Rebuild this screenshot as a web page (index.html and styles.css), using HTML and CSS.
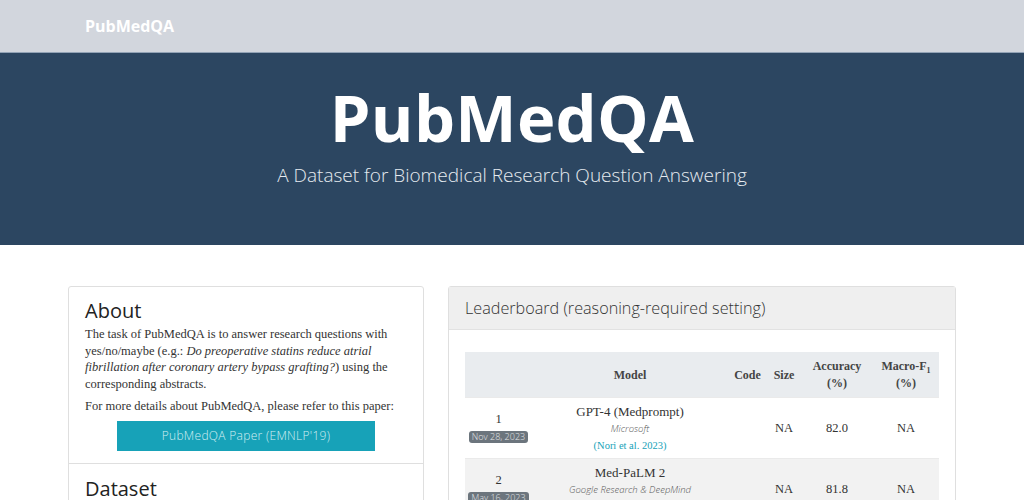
FILE: index.html
```html
<!DOCTYPE html>
<html>
<head>
<meta charset="utf-8">
<link rel="stylesheet" href="styles.css">
</head>
<body>
<nav class="navbar"><a class="brand" href="#">PubMedQA</a></nav>
<header class="hero">
  <h1 class="hero-title">PubMedQA</h1>
  <p class="hero-sub">A Dataset for Biomedical Research Question Answering</p>
</header>
<main class="content">
  <section class="card side">
    <div class="card-block">
      <h2 class="card-title">About</h2>
      <p class="para">The task of PubMedQA is to answer research questions with yes/no/maybe (e.g.: <em>Do preoperative statins reduce atrial fibrillation after coronary artery bypass grafting?</em>) using the corresponding abstracts.</p>
      <p class="para">For more details about PubMedQA, please refer to this paper:</p>
      <a class="btn" href="#">PubMedQA Paper (EMNLP'19)</a>
    </div>
    <div class="card-block">
      <h2 class="card-title">Dataset</h2>
    </div>
  </section>
  <section class="card board">
    <div class="board-head">Leaderboard (reasoning-required setting)</div>
    <div class="board-body">
      <table class="lb">
        <colgroup>
          <col class="c-rank"><col class="c-model"><col class="c-code"><col class="c-size"><col class="c-acc"><col class="c-f1">
        </colgroup>
        <thead>
          <tr><th></th><th>Model</th><th>Code</th><th>Size</th><th>Accuracy<br>(%)</th><th>Macro-F<sub>1</sub><br>(%)</th></tr>
        </thead>
        <tbody>
          <tr>
            <td><div>1</div><span class="badge">Nov 28, 2023</span></td>
            <td><div class="mname">GPT-4 (Medprompt)</div><div class="org">Microsoft</div><a class="ref" href="#">(Nori et al. 2023)</a></td>
            <td></td><td>NA</td><td>82.0</td><td>NA</td>
          </tr>
          <tr class="alt">
            <td><div>2</div><span class="badge">May 16, 2023</span></td>
            <td><div class="mname">Med-PaLM 2</div><div class="org">Google Research &amp; DeepMind</div><a class="ref" href="#">(Singhal et al. 2023)</a></td>
            <td></td><td>NA</td><td>81.8</td><td>NA</td>
          </tr>
        </tbody>
      </table>
    </div>
  </section>
</main>
</body>
</html>
```
FILE: styles.css
```css
html, body { margin: 0; padding: 0; }
body {
  background: #fff;
  color: #333;
  font-family: "Liberation Serif", "Times New Roman", serif;
  font-size: 12.5px;
}
.navbar {
  height: 52px;
  background: #d2d6dd;
  border-bottom: 1px solid #93a3b6;
  display: flex;
  align-items: center;
  padding-left: 85px;
}
.brand {
  font-family: "Open Sans", sans-serif;
  font-weight: 700;
  font-size: 16px;
  color: #fff;
  text-decoration: none;
}
.hero {
  background: #2c4661;
  height: 192px;
  text-align: center;
  color: #fff;
  padding-top: 25px;
  box-sizing: border-box;
}
.hero-title {
  font-family: "Open Sans", sans-serif;
  font-weight: 700;
  font-size: 65px;
  line-height: 78px;
  margin: 0;
  letter-spacing: 0.3px;
}
.hero-sub {
  font-family: "Open Sans", sans-serif;
  font-weight: 300;
  font-size: 19px;
  margin: 6px 0 0;
  color: #e6ebf0;
}
.content {
  display: grid;
  grid-template-columns: 356px 508px;
  column-gap: 24px;
  padding: 41px 68px 0;
  align-items: start;
}
.card {
  border: 1px solid #dfdfdf;
  border-radius: 3px;
  background: #fff;
}
.card-block {
  padding: 10px 16px 12px;
}
.card-block + .card-block { border-top: 1px solid #dfdfdf; padding-top: 11px; }
.card-title {
  font-family: "Open Sans", sans-serif;
  font-weight: 400;
  font-size: 20px;
  line-height: 28px;
  margin: 0 0 1px;
  color: #222;
}
.para {
  margin: 0 0 5px;
  line-height: 16.7px;
}
.btn {
  display: block;
  width: 258px;
  margin: 6px auto 0;
  height: 30px;
  line-height: 30px;
  background: #17a2b8;
  color: #d3eef2;
  text-align: center;
  font-family: "Open Sans", sans-serif;
  font-weight: 300;
  font-size: 12px;
  letter-spacing: 0.3px;
  text-decoration: none;
}
.board-head {
  background: #efefef;
  border-bottom: 1px solid #e2e2e2;
  height: 42px;
  line-height: 42px;
  padding: 0 16px;
  font-family: "Open Sans", sans-serif;
  font-weight: 300;
  font-size: 16.2px;
  color: #333;
}
.board-body {
  padding: 22px 16px 0;
}
.lb {
  width: 474px;
  border-collapse: collapse;
  table-layout: fixed;
  text-align: center;
  font-size: 12.5px;
}
.c-rank { width: 67px; }
.c-model { width: 196px; }
.c-code { width: 39px; }
.c-size { width: 34px; }
.c-acc { width: 72px; }
.c-f1 { width: 66px; }
.lb thead tr { background: #e9ecef; height: 45px; }
.lb th {
  font-size: 12px;
  font-weight: 700;
  color: #444;
  line-height: 17px;
  padding: 5px 0 3px;
}
.lb th sub { font-size: 8px; line-height: 0; }
.lb td {
  padding: 5px 0 4px;
  line-height: 17px;
  vertical-align: middle;
  border-top: 1px solid #eaeaea;
}
.lb tbody tr { height: 61px; }
.lb tr.alt { background: #f2f2f2; }
.badge {
  display: inline-block;
  background: #6c757d;
  color: #e3e6e8;
  font-family: "Open Sans", sans-serif;
  font-weight: 300;
  font-size: 9px;
  line-height: 12px;
  padding: 0 3px;
  border-radius: 3px;
}
.mname { font-size: 13px; color: #333; }
.org {
  font-family: "Open Sans", sans-serif;
  font-style: italic;
  font-weight: 300;
  font-size: 9.5px;
  color: #555;
}
.ref {
  color: #17a2b8;
  text-decoration: none;
  font-size: 10.5px;
}
```
